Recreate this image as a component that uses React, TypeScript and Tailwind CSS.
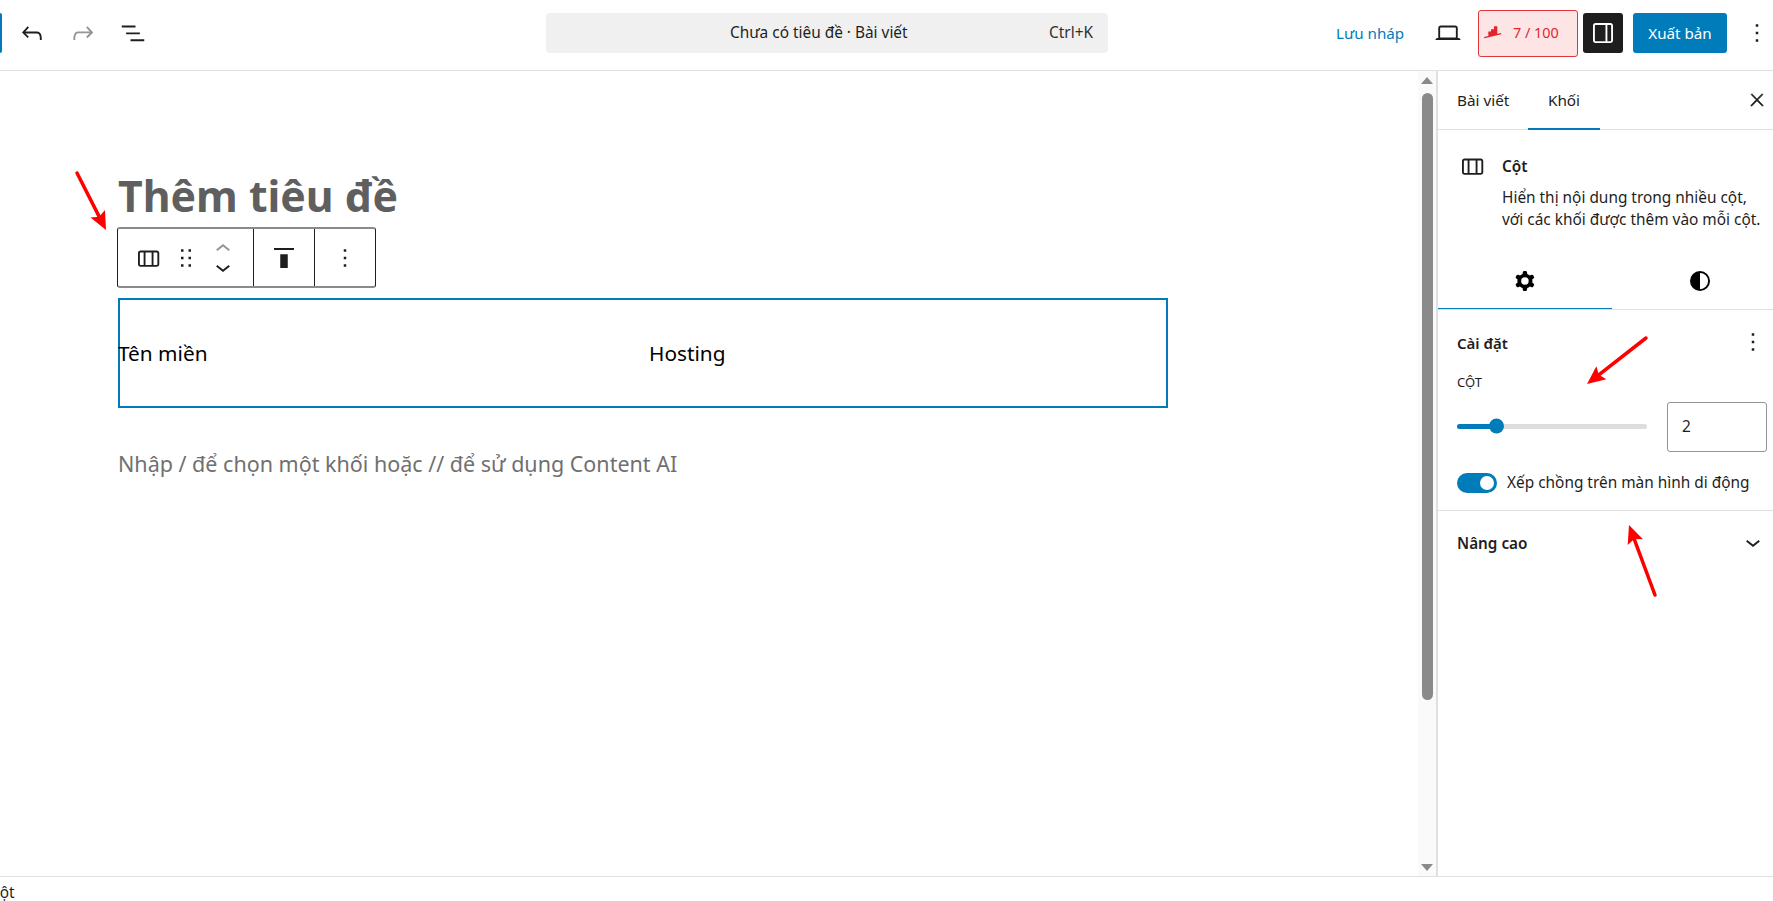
const font = { fontFamily: '"Noto Sans", sans-serif' };

function WpIcon({ d, size = 30, className = "", evenodd = false, thick = false }: { d: string; size?: number; className?: string; evenodd?: boolean; thick?: boolean }) {
  return (
    <svg width={size} height={size} viewBox="0 0 24 24" fill="currentColor" stroke={thick ? "currentColor" : undefined} strokeWidth={thick ? 0.8 : undefined} className={`shrink-0 ${className}`}>
      <path d={d} fillRule={evenodd ? "evenodd" : undefined} clipRule={evenodd ? "evenodd" : undefined} />
    </svg>
  );
}

const icons = {
  undo: "M18.3 11.7c-.6-.6-1.4-.9-2.3-.9H6.7l2.9-3.3-1.1-1-4.5 5L8.5 16l1-1-2.7-2.7H16c.5 0 .9.2 1.3.5 1 1 1 3.4 1 4.5v.3h1.5v-.2c0-1.5 0-4.3-1.5-5.7z",
  redo: "M15.6 6.5l-1.1 1 2.9 3.3H8c-.9 0-1.7.3-2.3.9-1.4 1.5-1.4 4.2-1.4 5.6v.2h1.5v-.3c0-1.1 0-3.5 1-4.5.3-.3.7-.5 1.3-.5h9.2L14.5 15l1.1 1.1 4.6-4.6-4.6-5z",
  list: "M3 6h11v1.5H3V6Zm3.5 5.5h11V13h-11v-1.5ZM21 17H10v1.5h11V17Z",
  columns: "M19 6H6c-1.1 0-2 .9-2 2v9c0 1.1.9 2 2 2h13c1.1 0 2-.9 2-2V8c0-1.1-.9-2-2-2zm-4.1 1.5v10H10v-10h4.9zM5.5 17V8c0-.3.2-.5.5-.5h2.5v10H6c-.3 0-.5-.2-.5-.5zm14 0c0 .3-.2.5-.5.5h-2.6v-10H19c.3 0 .5.2.5.5v9z",
  drag: "M8 7h2V5H8v2zm0 6h2v-2H8v2zm0 6h2v-2H8v2zm6-14v2h2V5h-2zm0 8h2v-2h-2v2zm0 6h2v-2h-2v2z",
  up: "M6.5 12.4L12 8l5.5 4.4-.9 1.2L12 10l-4.5 3.6-1-1.2z",
  down: "M17.5 11.6L12 16l-5.5-4.4.9-1.2L12 14l4.5-3.6 1 1.2z",
  alignTop: "M9 20h6V9H9v11zM4 4v1.5h16V4H4z",
  more: "M13 19h-2v-2h2v2zm0-6h-2v-2h2v2zm0-6h-2V5h2v2z",
  close: "M13 11.8l6.1-6.3-1-1-6.1 6.2-6.1-6.2-1 1 6.1 6.3-6.5 6.7 1 1 6.5-6.6 6.5 6.6 1-1z",
  laptop: "M20.5 16h-.7V8c0-1.1-.9-2-2-2H6.2c-1.1 0-2 .9-2 2v8h-.7c-.8 0-1.5.7-1.5 1.5h20c0-.8-.7-1.5-1.5-1.5zM5.7 8c0-.3.2-.5.5-.5h11.6c.3 0 .5.2.5.5v7.6H5.7V8z",
  drawer: "M18 4H6c-1.1 0-2 .9-2 2v12c0 1.1.9 2 2 2h12c1.1 0 2-.9 2-2V6c0-1.1-.9-2-2-2zm-4 14.5H6c-.3 0-.5-.2-.5-.5V6c0-.3.2-.5.5-.5h8v13zm4.5-.5c0 .3-.2.5-.5.5h-2.5v-13H18c.3 0 .5.2.5.5v12z",
  cog: "M10.289 4.836A1 1 0 0 1 11.275 4h1.306a1 1 0 0 1 .987.836l.244 1.466c.787.26 1.503.679 2.108 1.218l1.393-.522a1 1 0 0 1 1.216.437l.653 1.13a1 1 0 0 1-.23 1.273l-1.148.944a6.025 6.025 0 0 1 0 2.435l1.149.946a1 1 0 0 1 .23 1.272l-.653 1.13a1 1 0 0 1-1.216.437l-1.394-.522c-.605.54-1.32.958-2.108 1.218l-.244 1.466a1 1 0 0 1-.987.836h-1.306a1 1 0 0 1-.986-.836l-.244-1.466a5.995 5.995 0 0 1-2.108-1.218l-1.394.522a1 1 0 0 1-1.217-.436l-.653-1.131a1 1 0 0 1 .23-1.272l1.149-.946a6.026 6.026 0 0 1 0-2.435l-1.148-.944a1 1 0 0 1-.23-1.272l.653-1.131a1 1 0 0 1 1.217-.437l1.393.522a5.994 5.994 0 0 1 2.108-1.218l.244-1.466ZM14.929 12a3 3 0 1 1-6 0 3 3 0 0 1 6 0Z",
  styles: "M12 4a8 8 0 1 0 0 16 8 8 0 0 0 0-16Zm0 14.5v-13a6.5 6.5 0 0 1 0 13Z",
};

// red annotation arrows sit on top of the page
function Arrow({ x1, y1, x2, y2 }: { x1: number; y1: number; x2: number; y2: number }) {
  const a = Math.atan2(y2 - y1, x2 - x1);
  const len = 20;
  const spread = 0.42;
  const p1 = [x2 - len * Math.cos(a - spread), y2 - len * Math.sin(a - spread)];
  const p2 = [x2 - len * Math.cos(a + spread), y2 - len * Math.sin(a + spread)];
  const nx = x2 - (len - 5) * Math.cos(a);
  const ny = y2 - (len - 5) * Math.sin(a);
  return (
    <g>
      <line x1={x1} y1={y1} x2={nx} y2={ny} stroke="#ff0000" strokeWidth="3.5" strokeLinecap="round" />
      <polygon points={`${x2},${y2} ${p1[0]},${p1[1]} ${nx},${ny} ${p2[0]},${p2[1]}`} fill="#ff0000" />
    </g>
  );
}

export default function App() {
  return (
    <div style={font} className="relative flex h-screen w-full flex-col overflow-hidden bg-white text-[#1e1e1e]">
      <header className="flex h-[71px] shrink-0 items-center border-b border-[#e0e0e0] pb-[4px]">
        <div className="h-[40px] w-[2px] rounded-r-sm bg-[#007cba]" />
        <div className="ml-[15px] flex w-[131px] items-center justify-between">
          <WpIcon d={icons.undo} />
          <WpIcon d={icons.redo} className="text-[#949494]" />
          <WpIcon d={icons.list} />
        </div>
        <div className="ml-[398px] flex h-[40px] w-[562px] items-center rounded-[4px] bg-[#f0f0f0] text-[15.4px]">
          <span className="ml-[184px]">Chưa có tiêu đề · Bài viết</span>
          <span className="ml-auto mr-[15px] text-[#2f2f2f]">Ctrl+K</span>
        </div>
        <span className="ml-[228px] w-[67px] text-[15.2px] whitespace-nowrap text-[#007cba]">Lưu nháp</span>
        <WpIcon d={icons.laptop} className="ml-[30px]" />
        <div className="ml-[15px] flex h-[47px] w-[100px] items-center rounded-[3px] border border-[#e2353b] bg-[#fde5e5] text-[14.4px] text-[#e2262e]">
          <svg width="20" height="15" viewBox="0 -1 20 15" fill="#e2262e" className="ml-[5px]">
            <path d="M4.3 4.5H7v4.3H4.3zM7 2.2h3v6H7zM10 -.8h3.3V7.8H10zM0 10l17-4 .4 1.2L.4 11.3z" />
          </svg>
          <span className="ml-[9px]">7 / 100</span>
        </div>
        <div className="ml-[5px] flex h-[40px] w-[40px] items-center justify-center rounded-[3px] bg-[#1e1e1e] text-white">
          <WpIcon d={icons.drawer} />
        </div>
        <div className="ml-[10px] flex h-[40px] w-[94px] items-center justify-center rounded-[3px] bg-[#007cba] text-[15.2px] text-white">Xuất bản</div>
        <WpIcon d={icons.more} className="ml-[15px]" />
      </header>

      <div className="flex min-h-0 flex-1">
        <main className="min-w-0 flex-1 pl-[118px]">
          <h1 className="mt-[96px] h-[60px] text-[42.8px] leading-[58px] font-bold text-[#5f5f5f]">Thêm tiêu đề</h1>
          <div className="-ml-px flex h-[61px] w-[259px] rounded-[3px] border-x border-y-2 border-x-[#1e1e1e] border-y-[#8a8a8a]">
            <div className="flex w-[136px] items-center border-r border-[#1e1e1e] pl-[15px]">
              <WpIcon d={icons.columns} />
              <WpIcon d={icons.drag} className="ml-[8px]" />
              <div className="ml-[7px] flex flex-col">
                <WpIcon d={icons.up} className="text-[#949494]" />
                <WpIcon d={icons.down} className="-mt-[12px]" />
              </div>
            </div>
            <div className="flex w-[61px] items-center justify-center border-r border-[#1e1e1e]">
              <WpIcon d={icons.alignTop} />
            </div>
            <div className="flex flex-1 items-center justify-center">
              <WpIcon d={icons.more} />
            </div>
          </div>
          <section className="mt-[10px] grid h-[110px] w-[1050px] grid-cols-2 items-center gap-[16px] border-2 border-[#007cba] pt-[2px] text-[20.8px] text-black">
            <p className="-ml-[2px]">Tên miền</p>
            <p className="-ml-[2px]">Hosting</p>
          </section>
          <p className="mt-[40px] text-[21.5px] leading-[32px] text-[#707070]">Nhập / để chọn một khối hoặc // để sử dụng Content AI</p>
        </main>

        <div className="flex w-[18px] shrink-0 flex-col items-center bg-[#fafafa] pt-[6px] pb-[5px]">
          <div className="h-0 w-0 border-x-[6px] border-b-[7px] border-x-transparent border-b-[#8a8a8a]" />
          <div className="mt-[9px] h-[607px] w-[11px] rounded-full bg-[#8a8a8a]" />
          <div className="mt-auto h-0 w-0 border-x-[6px] border-t-[7px] border-x-transparent border-t-[#8a8a8a]" />
        </div>

        <aside className="w-[337px] shrink-0 border-l-2 border-[#e0e0e0]">
          <div className="flex h-[59px] items-center border-b border-[#e0e0e0] text-[15.3px]">
            <span className="ml-[19px] w-[71px] whitespace-nowrap">Bài viết</span>
            <div className="relative flex h-full w-[72px] items-center justify-center">
              Khối
              <div className="absolute right-0 -bottom-px left-0 h-[2px] bg-[#007cba]" />
            </div>
            <WpIcon d={icons.close} size={20} thick className="ml-auto mr-[6px]" />
          </div>

          <div className="flex h-[113px] pt-[26px]">
            <WpIcon d={icons.columns} className="ml-[19px] mt-[-5px]" />
            <div className="ml-[15px] text-[15.4px] leading-[22px] whitespace-nowrap">
              <p className="mb-[9px] font-semibold">Cột</p>
              <p>Hiển thị nội dung trong nhiều cột,</p>
              <p>với các khối được thêm vào mỗi cột.</p>
            </div>
          </div>
          <div className="flex h-[67px] overflow-hidden border-b border-[#e0e0e0] text-black">
            <div className="relative -ml-px flex w-[175px] shrink-0 items-center justify-center pt-[9px]">
              <WpIcon d={icons.cog} evenodd />
              <div className="absolute right-0 bottom-0 left-0 h-[1px] bg-[#007cba]" />
            </div>
            <div className="flex w-[175px] shrink-0 items-center justify-center pt-[9px]">
              <WpIcon d={icons.styles} evenodd />
            </div>
          </div>

          <div className="h-[201px] border-b border-[#e0e0e0] pl-[19px]">
            <div className="flex h-[60px] items-center justify-between pr-[5px] pt-[4px]">
              <span className="translate-y-[1px] text-[15px] font-semibold">Cài đặt</span>
              <WpIcon d={icons.more} />
            </div>
            <p className="mt-[2px] text-[13px] leading-[20px]">CỘT</p>
            <div className="mt-[10px] flex h-[50px] items-center">
              <div className="relative mb-[2px] h-[5px] w-[190px] rounded-full bg-[#dddddd]">
                <div className="h-full w-[39px] rounded-full bg-[#007cba]" />
                <div className="absolute top-1/2 left-[32px] h-[15px] w-[15px] -translate-y-1/2 rounded-full bg-[#007cba]" />
              </div>
              <div className="ml-[20px] flex h-[50px] w-[100px] items-center rounded-[3px] border border-[#949494] pl-[14px] text-[15.4px]">2</div>
            </div>
            <div className="mt-[19px] flex items-center">
              <div className="flex h-[20px] w-[40px] items-center justify-end rounded-full bg-[#007cba] pr-[3px]">
                <div className="h-[14px] w-[14px] rounded-full bg-white" />
              </div>
              <span className="ml-[10px] text-[15.4px] whitespace-nowrap">Xếp chồng trên màn hình di động</span>
            </div>
          </div>

          <div className="flex h-[66px] items-center justify-between pr-[5px] pb-[2px] pl-[19px]">
            <span className="text-[15.3px] font-semibold">Nâng cao</span>
            <WpIcon d={icons.down} className="-translate-y-[1px]" />
          </div>
        </aside>
      </div>

      <footer className="h-[25px] shrink-0 overflow-hidden border-t border-[#e0e0e0] text-[15.4px] leading-[32px]">
        <span className="-ml-[10px] inline-block">Cột</span>
      </footer>

      <svg className="pointer-events-none absolute inset-0" width="1773" height="901">
        <Arrow x1={77} y1={173} x2={106} y2={230} />
        <Arrow x1={1646} y1={338} x2={1587} y2={384} />
        <Arrow x1={1655} y1={595} x2={1629} y2={525} />
      </svg>
    </div>
  );
}
